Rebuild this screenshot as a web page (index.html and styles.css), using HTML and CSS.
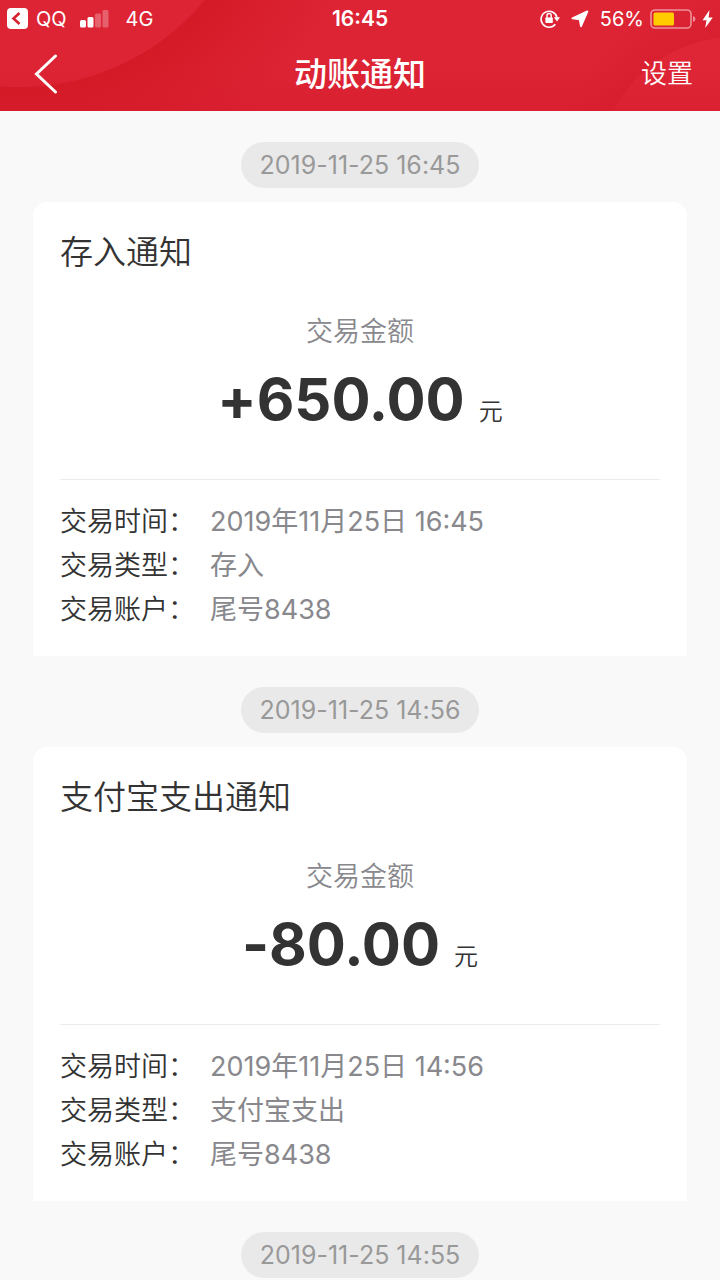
FILE: index.html
```html
<!DOCTYPE html>
<html lang="zh-CN">
<head>
<meta charset="utf-8">
<meta name="viewport" content="width=device-width, initial-scale=1">
<title>动账通知</title>
<link rel="stylesheet" href="styles.css">
</head>
<body>
<header class="header">
  <svg class="header-art" viewBox="0 0 720 111" preserveAspectRatio="none" aria-hidden="true">
    <defs>
      <radialGradient id="shadeLeft" gradientUnits="userSpaceOnUse" cx="20" cy="-153" r="350">
        <stop offset="0.68" stop-color="#d41a26"/>
        <stop offset="1" stop-color="#d41a26" stop-opacity="0"/>
      </radialGradient>
      <radialGradient id="shadeRight" gradientUnits="userSpaceOnUse" cx="735" cy="175" r="180">
        <stop offset="0.75" stop-color="#d41c2c" stop-opacity="0.6"/>
        <stop offset="1" stop-color="#d41c2c" stop-opacity="0"/>
      </radialGradient>
      <linearGradient id="shadeBottom" x1="0" y1="0" x2="0" y2="1">
        <stop offset="0.6" stop-color="#d51b2b" stop-opacity="0"/>
        <stop offset="1" stop-color="#d51b2b" stop-opacity="0.5"/>
      </linearGradient>
    </defs>
    <rect width="720" height="111" fill="#dd2435"/>
    <circle cx="20" cy="-153" r="350" fill="url(#shadeLeft)"/>
    <circle cx="20" cy="-153" r="240" fill="#dd2435"/>
    <circle cx="735" cy="175" r="180" fill="url(#shadeRight)"/>
    <circle cx="735" cy="175" r="138" fill="#df2637"/>
    <rect width="720" height="111" fill="url(#shadeBottom)"/>
  </svg>
  <div class="status">
    <div class="status-left">
      <svg class="icon" width="22" height="22" viewBox="0 0 22 22" aria-hidden="true">
        <rect x="0" y="0" width="21" height="21" rx="4" fill="#fff"/>
        <path d="M12.500 5 6.500 10.500l6 5.500" fill="none" stroke="#d9202f" stroke-width="2.600"/>
      </svg>
      <span class="app">QQ</span>
      <svg class="icon" width="29" height="18" viewBox="0 0 29 18" fill="#fff" aria-hidden="true">
        <rect x="0" y="10" width="6" height="7.500" rx="1.500"/>
        <rect x="7.500" y="7" width="6" height="10.500" rx="1.500"/>
        <rect x="15" y="3.500" width="6" height="14" rx="1.500" opacity=".28"/>
        <rect x="22.500" y="0" width="6" height="17.500" rx="1.500" opacity=".28"/>
      </svg>
      <span class="network">4G</span>
    </div>
    <span class="clock">16:45</span>
    <div class="status-right">
      <svg class="icon" width="20" height="20" viewBox="0 0 20 20" aria-hidden="true">
        <path d="M15.300 15.300A8 8 0 1 1 17 9" fill="none" stroke="#fff" stroke-width="1.600"/>
        <path d="M13.800 8.300h6.200l-3 4.200z" fill="#fff"/>
        <rect x="5.400" y="8.500" width="7.400" height="5.600" rx="0.800" fill="#fff"/>
        <path d="M7 9V6.600a2.100 2.100 0 0 1 4.200 0V9" fill="none" stroke="#fff" stroke-width="1.400"/>
      </svg>
      <svg class="icon arrow" width="18" height="18" viewBox="0 0 18 18" aria-hidden="true">
        <path d="M1.500 8.300 16.300 1.500 10 16.200 8.800 9.300z" fill="#fff" stroke="#fff" stroke-width="2" stroke-linejoin="round"/>
      </svg>
      <span class="percent">56%</span>
      <svg class="icon" width="46" height="20" viewBox="0 0 46 20" aria-hidden="true">
        <rect x="1" y="1" width="40" height="18" rx="4" fill="none" stroke="#fff" stroke-opacity=".5" stroke-width="1.600"/>
        <path d="M43 7q2.500 1 2.500 3t-2.500 3z" fill="#fff" fill-opacity=".5"/>
        <rect x="3.500" y="3.500" width="20.500" height="13" rx="1.500" fill="#ffcc00"/>
      </svg>
      <svg class="icon" width="11" height="18" viewBox="0 0 11 18" aria-hidden="true">
        <path d="M7.500 0 0.500 10.300h4L3.200 18 10.800 7.400H6.600z" fill="#fff"/>
      </svg>
    </div>
  </div>
  <nav class="nav">
    <button class="back" type="button" aria-label="返回">
      <svg width="24" height="40" viewBox="0 0 24 40" aria-hidden="true">
        <path d="M21.500 2 2.500 20l19 18" fill="none" stroke="#fff" stroke-width="3" stroke-linecap="round"/>
      </svg>
    </button>
    <h1 class="nav-title">动账通知</h1>
    <button class="settings" type="button">设置</button>
  </nav>
</header>
<main class="feed">
  <time class="stamp">2019-11-25 16:45</time>
  <article class="card">
    <h2 class="card-title">存入通知</h2>
    <p class="amount-label">交易金额</p>
    <p class="amount"><strong class="figure">+650.00</strong><span class="unit">元</span></p>
    <dl class="details">
      <dt>交易时间：</dt><dd>2019年11月25日 16:45</dd>
      <dt>交易类型：</dt><dd>存入</dd>
      <dt>交易账户：</dt><dd>尾号8438</dd>
    </dl>
  </article>
  <time class="stamp">2019-11-25 14:56</time>
  <article class="card">
    <h2 class="card-title">支付宝支出通知</h2>
    <p class="amount-label">交易金额</p>
    <p class="amount"><strong class="figure">-80.00</strong><span class="unit">元</span></p>
    <dl class="details">
      <dt>交易时间：</dt><dd>2019年11月25日 14:56</dd>
      <dt>交易类型：</dt><dd>支付宝支出</dd>
      <dt>交易账户：</dt><dd>尾号8438</dd>
    </dl>
  </article>
  <time class="stamp">2019-11-25 14:55</time>
</main>
</body>
</html>
```
FILE: styles.css
```css
* {
  box-sizing: border-box;
  margin: 0;
  padding: 0;
}

body {
  background: #f9f9f9;
  color: #333;
  font-family: Inter, "Noto Sans CJK SC", sans-serif;
}

button {
  border: 0;
  background: none;
  color: inherit;
  font-family: inherit;
}

.header {
  position: relative;
  isolation: isolate;
  color: #fff;
}

.header-art {
  position: absolute;
  inset: 0;
  z-index: -1;
  width: 100%;
  height: 100%;
}

.status {
  display: grid;
  grid-template-columns: 1fr auto 1fr;
  align-items: center;
  height: 37px;
  padding: 0 7px;
  font-size: 20px;
}

.status-left,
.status-right {
  display: flex;
  align-items: center;
}

.status-right {
  justify-content: flex-end;
  gap: 6px;
}

.icon {
  flex: none;
}

.app {
  margin: 0 13px 0 7px;
}

.network {
  margin-left: 17px;
}

.arrow {
  margin: 0 5px;
}

.clock {
  font-size: 21px;
  font-weight: 600;
}

.nav {
  display: grid;
  grid-template-columns: 1fr auto 1fr;
  align-items: center;
  height: 74px;
  padding: 0 27px;
}

.back {
  justify-self: start;
  height: 40px;
  padding-left: 7px;
}

.nav-title {
  font-size: 33px;
  line-height: 48px;
  font-weight: 500;
}

.settings {
  justify-self: end;
  font-size: 26px;
  font-weight: 350;
  line-height: 40px;
}

.feed {
  display: flex;
  flex-direction: column;
  align-items: center;
  padding: 31px 33px 0;
}

.stamp {
  padding: 1px 19px 0;
  border-radius: 23px;
  background: #e9e9e9;
  color: #999;
  font-size: 25px;
  font-feature-settings: "calt" 0;
  line-height: 45px;
}

.card {
  align-self: stretch;
  margin: 14px 0 31px;
  padding: 24px 27px;
  border-radius: 14px 14px 0 0;
  background: #fff;
}

.card-title {
  font-family: "Noto Sans CJK SC", sans-serif;
  font-size: 33px;
  line-height: 48px;
  font-weight: 350;
}

.amount-label {
  margin-top: 36px;
  color: #88888d;
  font-family: "Noto Sans CJK SC", sans-serif;
  font-size: 27px;
  font-weight: 350;
  line-height: 40px;
  text-align: center;
}

.amount {
  display: flex;
  justify-content: center;
  align-items: baseline;
  gap: 14px;
  height: 129px;
  line-height: 98px;
}

.figure {
  font-size: 58px;
  font-weight: 700;
  font-feature-settings: "calt" 0;
}

.unit {
  font-size: 24px;
  font-weight: 350;
}

.details {
  display: grid;
  grid-template-columns: 150px 1fr;
  padding-top: 20px;
  border-top: 1px solid #ebebeb;
  font-size: 27px;
  line-height: 44px;
}

.details dt {
  font-weight: 350;
}

.details dd {
  color: #88888d;
}
```
